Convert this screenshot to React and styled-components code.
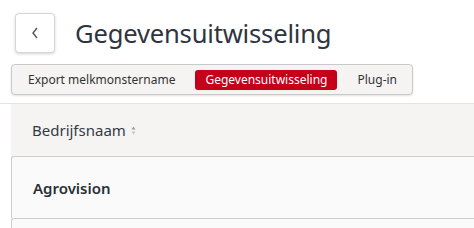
import React from 'react';
import styled, { createGlobalStyle } from 'styled-components';

const GlobalStyle = createGlobalStyle`
    body {
        margin: 0;
        background: #ffffff;
        font-family: 'Noto Sans', 'Liberation Sans', sans-serif;
        color: #333333;
    }
`;

const tabs = ['Export melkmonstername', 'Gegevensuitwisseling', 'Plug-in'];

const App = () => {
    return (
        <Page>
            <GlobalStyle />
            <Header>
                <BackButton type='button'>
                    <svg width='10' height='14' viewBox='0 0 10 14'>
                        <path d='M7 2 L3 7 L7 12' fill='none' stroke='#555' strokeWidth='1.4' />
                    </svg>
                </BackButton>
                <Title>Gegevensuitwisseling</Title>
            </Header>
            <TabBar>
                {tabs.map((tab) => (
                    <Tab key={tab} $active={tab === 'Gegevensuitwisseling'}>
                        {tab}
                    </Tab>
                ))}
            </TabBar>
            <Divider />
            <Table>
                <HeadRow>
                    <HeadCell>
                        Bedrijfsnaam
                        <SortIcon>
                            <svg width='5' height='9' viewBox='0 0 5 9'>
                                <path d='M2.5 0.5 L4.5 3.5 L0.5 3.5 Z' fill='#9a9a9a' />
                                <path d='M2.5 8.5 L4.5 5.5 L0.5 5.5 Z' fill='#c4c4c4' />
                            </svg>
                        </SortIcon>
                    </HeadCell>
                </HeadRow>
                <Row>
                    <Cell>Agrovision</Cell>
                </Row>
                <Row />
            </Table>
        </Page>
    );
};

const Page = styled.div`
    width: 474px;
    height: 228px;
    overflow: hidden;
`;

const Header = styled.header`
    display: flex;
    align-items: center;
    gap: 20px;
    padding: 13px 0 0 15px;
`;

const BackButton = styled.button`
    width: 40px;
    height: 40px;
    display: flex;
    align-items: center;
    justify-content: center;
    background: #ffffff;
    border: 1px solid #d6d6d6;
    border-radius: 4px;
    box-shadow: 0 1px 3px rgba(0, 0, 0, 0.18);
    padding: 0;
`;

const Title = styled.h1`
    margin: 0;
    font-size: 25.6px;
    font-weight: 400;
    color: #2f3540;
    letter-spacing: -0.2px;
`;

const TabBar = styled.nav`
    display: inline-flex;
    align-items: center;
    gap: 20px;
    margin: 11px 0 0 11px;
    height: 31px;
    box-sizing: border-box;
    padding: 0 15px 0 16px;
    background: #f6f4f3;
    border: 1px solid #c9c9c9;
    border-radius: 4px;
    box-shadow: 0 1px 2px rgba(0, 0, 0, 0.12);
`;

const Tab = styled.span`
    font-size: 12px;
    line-height: 20px;
    height: 20px;
    padding: ${(p) => (p.$active ? '0 10px' : '0')};
    border-radius: 3px;
    color: ${(p) => (p.$active ? '#ffffff' : '#333333')};
    background: ${(p) => (p.$active ? '#c4001a' : 'transparent')};
    white-space: nowrap;
`;

const Divider = styled.hr`
    margin: 8px 0 0;
    border: 0;
    border-top: 1px solid #e4e4e4;
`;

const Table = styled.section`
    margin-left: 11px;
    background: #f5f4f3;
`;

const HeadRow = styled.div`
    height: 52px;
    display: flex;
    align-items: center;
    padding-left: 21px;
`;

const HeadCell = styled.span`
    display: flex;
    align-items: center;
    gap: 5px;
    font-size: 15px;
    color: #333a45;
`;

const SortIcon = styled.span`
    display: flex;
    margin-top: 1px;
`;

const Row = styled.div`
    height: 61px;
    display: flex;
    align-items: center;
    padding-left: 21px;
    background: #fafafa;
    border: 1px solid #cfcfcf;
    border-right: 0;
    border-bottom: 0;
    border-radius: 3px 0 0 0;
`;

const Cell = styled.span`
    font-size: 15px;
    font-weight: 600;
    color: #2b2f36;
`;

export default App;
